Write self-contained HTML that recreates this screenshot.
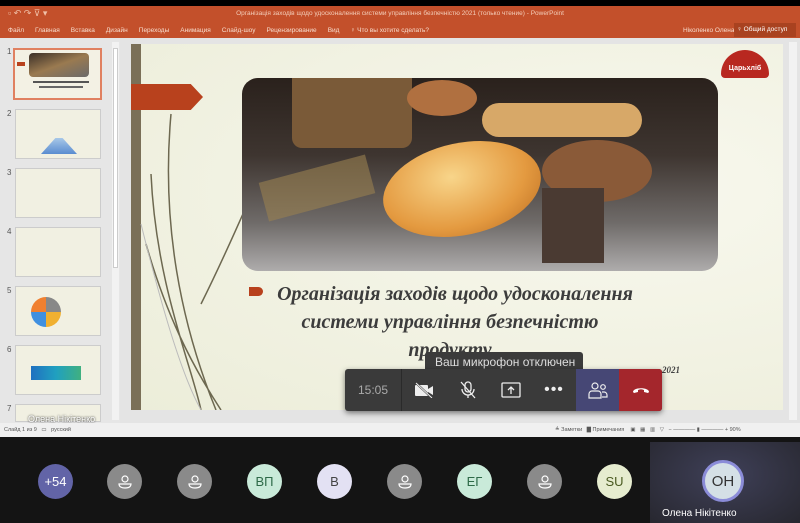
<!DOCTYPE html>
<html><head><meta charset="utf-8"><style>
*{margin:0;padding:0;box-sizing:border-box}
body{width:800px;height:523px;overflow:hidden;background:#111;font-family:"Liberation Sans",sans-serif;position:relative}
.a{position:absolute}
.tb{background:#c3502b;color:#f6d6c8;font-size:7px}
.th{position:absolute;left:13px;top:48px;width:89px;height:52px;border:2px solid #e08060;background:#f3f1e4}
.thumb{position:absolute;left:15px;width:86px;height:50px;background:#f1f0e2;border:1px solid #ccc}
.num{position:absolute;left:7px;font-size:8px;color:#555}
.av{position:absolute;top:464px;width:35px;height:35px;border-radius:50%;display:flex;align-items:center;justify-content:center;font-size:13px}
.g{background:#8a8a8a}
.ctl{position:absolute;top:369px;height:42px;display:flex;align-items:center;justify-content:center}
.rib span{margin-right:11px}
</style></head><body>
<div class="a" style="left:0;top:0;width:800px;height:6px;background:#000"></div>
<div class="a tb" style="left:0;top:6px;width:800px;height:32px"></div>
<div class="a" style="left:0;top:10px;width:800px;text-align:center;color:#f3cdb9;font-size:6.5px">Організація заходів щодо удосконалення системи управління безпечністю 2021 (только чтение) - PowerPoint</div>
<div class="a" style="left:8px;top:8px;color:#f0c0a8;font-size:9px">▫ ↶ ↷ ⊽ ▾</div>
<div class="a rib" style="left:8px;top:27px;color:#f7dccd;font-size:6.5px;white-space:nowrap"><span>Файл</span><span>Главная</span><span>Вставка</span><span>Дизайн</span><span>Переходы</span><span>Анимация</span><span>Слайд-шоу</span><span>Рецензирование</span><span>Вид</span><span>♀ Что вы хотите сделать?</span></div>
<div class="a" style="left:683px;top:27px;color:#f7dccd;font-size:6.5px">Ніколенко Олена</div>
<div class="a" style="left:734px;top:23px;width:62px;height:14px;background:#a94220;color:#fff;font-size:6.5px;padding:3px">♀ Общий доступ</div>
<!-- left pane -->
<div class="a" style="left:0;top:38px;width:120px;height:385px;background:#e6e6e6"></div>
<div class="a" style="left:112px;top:42px;width:7px;height:378px;background:#f2f2f2"></div>
<div class="a" style="left:113px;top:48px;width:5px;height:220px;background:#fff;border:1px solid #ccc"></div>
<div class="th"><div style="position:absolute;left:14px;top:3px;width:60px;height:24px;background:linear-gradient(160deg,#3a2f28,#9a7a50 50%,#6a6a6a);border-radius:4px"></div><div style="position:absolute;left:2px;top:12px;width:8px;height:4px;background:#b8421d"></div><div style="position:absolute;left:18px;top:31px;width:56px;height:2px;background:#555"></div><div style="position:absolute;left:24px;top:36px;width:44px;height:2px;background:#666"></div></div>
<div class="num" style="top:47px">1</div>
<div class="num" style="top:109px">2</div><div class="thumb" style="top:109px"><div style="position:absolute;left:25px;top:28px;width:36px;height:16px;background:linear-gradient(#a8c8e8,#5a8cd0);clip-path:polygon(40% 0,60% 0,100% 100%,0 100%)"></div></div>
<div class="num" style="top:168px">3</div><div class="thumb" style="top:168px"></div>
<div class="num" style="top:227px">4</div><div class="thumb" style="top:227px"></div>
<div class="num" style="top:286px">5</div><div class="thumb" style="top:286px"><div style="position:absolute;left:15px;top:10px;width:30px;height:30px;border-radius:50%;background:conic-gradient(#888 0 25%,#f0b030 0 50%,#4090e0 0 75%,#f08030 0)"></div></div>
<div class="num" style="top:345px">6</div><div class="thumb" style="top:345px"><div style="position:absolute;left:15px;top:20px;width:50px;height:14px;background:linear-gradient(90deg,#2070c0,#20a0c0,#40b080)"></div></div>
<div class="num" style="top:404px">7</div><div class="thumb" style="top:404px;height:18px"></div>
<div class="a" style="left:28px;top:414px;color:#fff;font-size:9px;text-shadow:0 0 2px #000">Олена Нікітенко</div>
<!-- main -->
<div class="a" style="left:120px;top:38px;width:680px;height:385px;background:#e4e4e4"></div>
<div class="a" style="left:789px;top:42px;width:8px;height:378px;background:#f2f2f2"></div>
<div class="a" style="left:131px;top:44px;width:652px;height:366px;background:radial-gradient(ellipse at 75% 40%,#f8f8ee,#ecedd9)"></div>
<div class="a" style="left:131px;top:44px;width:10px;height:366px;background:#7a6f57"></div>
<svg class="a" style="left:131px;top:44px" width="130" height="366"><path d="M40 70 C30 180 50 280 85 366 M20 130 C25 240 60 320 70 366 M70 260 C100 200 120 150 130 130 M15 200 C35 270 60 320 90 366" stroke="#6d6850" stroke-width="1.5" fill="none"/><path d="M10 180 C30 260 50 330 70 366" stroke="#bbb" stroke-width="1" fill="none"/></svg>
<div class="a" style="left:131px;top:84px;width:72px;height:26px;background:#b8411d;clip-path:polygon(0 0,83% 0,100% 50%,83% 100%,0 100%)"></div>
<div class="a" style="left:242px;top:78px;width:476px;height:193px;border-radius:16px;overflow:hidden;background:linear-gradient(180deg,#2a211c 0%,#3e3530 40%,#6f6b69 75%,#aeacac 100%)">
<div class="a" style="left:50px;top:0;width:120px;height:70px;background:#7a5a38;border-radius:0 0 10px 10px"></div>
<div class="a" style="left:165px;top:2px;width:70px;height:36px;background:#b07040;border-radius:50%"></div>
<div class="a" style="left:240px;top:25px;width:160px;height:34px;background:#d7a868;border-radius:18px"></div>
<div class="a" style="left:300px;top:62px;width:110px;height:62px;background:#8a5a38;border-radius:50%"></div>
<div class="a" style="left:140px;top:65px;width:160px;height:92px;background:radial-gradient(ellipse at 45% 35%,#f8d58a,#e49a40 60%,#b86a20);border-radius:50%;transform:rotate(-12deg)"></div>
<div class="a" style="left:300px;top:110px;width:62px;height:75px;background:#4a3a32"></div>
<div class="a" style="left:20px;top:90px;width:110px;height:40px;background:#9a8050;opacity:.6;transform:rotate(-15deg)"></div>
</div>
<div class="a" style="left:721px;top:50px;width:48px;height:28px;background:#b82820;border-radius:24px 24px 4px 4px;color:#fff;font-size:7px;text-align:center;padding-top:15px;font-weight:bold">Царьхліб</div>
<div class="a" style="left:249px;top:287px;width:14px;height:9px;background:#b8411d;border-radius:0 5px 5px 0"></div>
<div class="a" style="left:250px;top:280px;width:400px;text-align:center;font-family:'Liberation Serif',serif;font-style:italic;font-weight:bold;font-size:20px;line-height:28px;color:#3c3c3c">&nbsp;&nbsp;Організація заходів щодо удосконалення<br>системи управління безпечністю<br>продукту</div>
<div class="a" style="left:662px;top:365px;font-family:'Liberation Serif',serif;font-style:italic;font-weight:bold;font-size:9px;color:#444">2021</div>
<!-- status -->
<div class="a" style="left:0;top:423px;width:800px;height:14px;background:#f0f0f0;font-size:5.5px;color:#555;padding:4px 4px">Слайд 1 из 9 &nbsp; ▭ &nbsp; русский<span style="position:absolute;left:555px">≜ Заметки &nbsp; ▇ Примечания &nbsp;&nbsp; ▣ &nbsp; ▦ &nbsp; ▥ &nbsp; ▽ &nbsp; − ———— ▮ ———— + 90%</span></div>
<div class="a" style="left:0;top:437px;width:800px;height:86px;background:#141414"></div>
<div class="a" style="left:650px;top:442px;width:150px;height:81px;background:radial-gradient(ellipse at 50% 40%,#3f4058,#27272f)"></div>
<!-- tooltip & controls -->
<div class="a" style="left:425px;top:352px;width:158px;height:22px;background:#3b3b3b;border-radius:3px;color:#ddd;font-size:12px;padding:3px 0 0 10px">Ваш микрофон отключен</div>
<div class="a" style="left:345px;top:369px;width:317px;height:42px;background:#3a3a3a;border-radius:3px;box-shadow:0 2px 6px rgba(0,0,0,.5)"></div>
<div class="ctl" style="left:345px;width:57px;color:#aaa;font-size:12px;border-right:1px solid #2a2a2a">15:05</div>
<div class="ctl" style="left:402px;width:44px"><svg width="20" height="16"><rect x="1" y="3" width="13" height="11" rx="1" fill="#eee"/><path d="M14 7l5-3v9l-5-3z" fill="#eee"/><path d="M2 1l16 15" stroke="#3a3a3a" stroke-width="2"/><path d="M2 1l16 15" stroke="#eee" stroke-width="1"/></svg></div>
<div class="ctl" style="left:446px;width:44px"><svg width="18" height="20"><rect x="6" y="2" width="6" height="10" rx="3" fill="none" stroke="#eee" stroke-width="1.3"/><path d="M3 9a6 6 0 0 0 12 0M9 15v3M2 2l14 16" stroke="#eee" stroke-width="1.3" fill="none"/></svg></div>
<div class="ctl" style="left:490px;width:42px"><svg width="20" height="16"><rect x="1" y="1" width="18" height="14" rx="1" fill="none" stroke="#eee" stroke-width="1.3"/><path d="M10 12V5M7 8l3-3 3 3" stroke="#eee" stroke-width="1.3" fill="none"/></svg></div>
<div class="ctl" style="left:532px;width:44px;color:#eee;font-size:16px;letter-spacing:1px">•••</div>
<div class="ctl" style="left:576px;width:43px;background:#464775"><svg width="20" height="18"><circle cx="7" cy="5" r="3" fill="none" stroke="#eee" stroke-width="1.2"/><circle cx="15" cy="6" r="2.3" fill="none" stroke="#eee" stroke-width="1.2"/><path d="M1 17v-4a3 3 0 0 1 3-3h6a3 3 0 0 1 3 3v4zM14 11h2a3 3 0 0 1 3 3v2h-5" fill="none" stroke="#eee" stroke-width="1.2"/></svg></div>
<div class="ctl" style="left:619px;width:43px;background:#a4262c;border-radius:0 3px 3px 0"><svg width="18" height="8"><path d="M1 6c0-5 16-5 16 0l-1 1-4-1v-2c-2-1-4-1-6 0v2l-4 1z" fill="#fff"/></svg></div>
<!-- avatars -->
<div class="av" style="left:38px;background:#6264a7;color:#fff">+54</div>
<div class="av g" style="left:107px"><svg width="14" height="14"><circle cx="7" cy="4" r="3" fill="none" stroke="#fff" stroke-width="1.2"/><path d="M1 9h12c0 3-3 4-6 4s-6-1-6-4z" fill="none" stroke="#fff" stroke-width="1.2"/></svg></div>
<div class="av g" style="left:177px"><svg width="14" height="14"><circle cx="7" cy="4" r="3" fill="none" stroke="#fff" stroke-width="1.2"/><path d="M1 9h12c0 3-3 4-6 4s-6-1-6-4z" fill="none" stroke="#fff" stroke-width="1.2"/></svg></div>
<div class="av" style="left:247px;background:#c9ead9;color:#2e6a48">ВП</div>
<div class="av" style="left:317px;background:#e3e1f3;color:#444">В</div>
<div class="av g" style="left:387px"><svg width="14" height="14"><circle cx="7" cy="4" r="3" fill="none" stroke="#fff" stroke-width="1.2"/><path d="M1 9h12c0 3-3 4-6 4s-6-1-6-4z" fill="none" stroke="#fff" stroke-width="1.2"/></svg></div>
<div class="av" style="left:457px;background:#c9ead9;color:#2e6a48">ЕГ</div>
<div class="av g" style="left:527px"><svg width="14" height="14"><circle cx="7" cy="4" r="3" fill="none" stroke="#fff" stroke-width="1.2"/><path d="M1 9h12c0 3-3 4-6 4s-6-1-6-4z" fill="none" stroke="#fff" stroke-width="1.2"/></svg></div>
<div class="av" style="left:597px;background:#e6eccf;color:#4a5a20">SU</div>
<div class="av" style="left:702px;top:460px;width:42px;height:42px;background:#d5e0e6;color:#333;border:3px solid #8b8cd8;font-size:15px">ОН</div>
<div class="a" style="left:662px;top:508px;color:#fff;font-size:10px">Олена Нікітенко</div>
</body></html>
